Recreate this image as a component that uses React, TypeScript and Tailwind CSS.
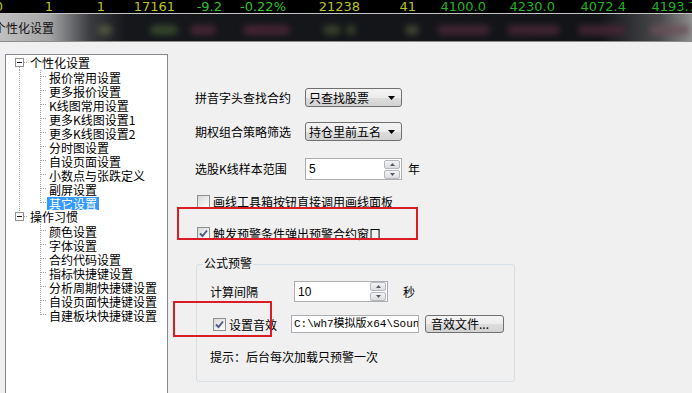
import React from "react";

const ticker = [
  { v: "0", w: "w-[3px]", c: "text-[#bcc21e]" },
  { v: "1", w: "w-[50px]", c: "text-[#bcc21e]" },
  { v: "1", w: "w-[52px]", c: "text-[#bcc21e]" },
  { v: "17161", w: "w-[70px]", c: "text-[#bcc21e]" },
  { v: "-9.2", w: "w-[47px]", c: "text-[#2cc22c]" },
  { v: "-0.22%", w: "w-[64px]", c: "text-[#2cc22c]" },
  { v: "21238", w: "w-[74px]", c: "text-[#bcc21e]" },
  { v: "41", w: "w-[56px]", c: "text-[#bcc21e]" },
  { v: "4100.0", w: "w-[70px]", c: "text-[#22b222]" },
  { v: "4230.0", w: "w-[69px]", c: "text-[#22b222]" },
  { v: "4072.4", w: "w-[71px]", c: "text-[#22b222]" },
  { v: "4193.7", w: "w-[71px]", c: "text-[#22b222]" },
];

// blurred reflections of the quote row in the glass title bar
const blobs = [
  "left-[98px] w-[14px] bg-[#5a6040]",
  "left-[150px] w-[28px] bg-[#3c5030]",
  "left-[190px] w-[26px] bg-[#502838]",
  "left-[243px] w-[47px] bg-[#502838]",
  "left-[323px] w-[18px] bg-[#404a30]",
  "left-[346px] w-[10px] bg-[#404a30]",
  "left-[405px] w-[14px] bg-[#4a5038]",
  "left-[437px] w-[53px] bg-[#4a2838]",
  "left-[507px] w-[53px] bg-[#4a2838]",
  "left-[578px] w-[48px] bg-[#4a2838]",
  "left-[650px] w-[40px] bg-[#6a5058]",
];

const tree = [
  {
    label: "个性化设置",
    children: [
      "报价常用设置",
      "更多报价设置",
      "K线图常用设置",
      "更多K线图设置1",
      "更多K线图设置2",
      "分时图设置",
      "自设页面设置",
      "小数点与张跌定义",
      "副屏设置",
      "其它设置",
    ],
  },
  {
    label: "操作习惯",
    children: [
      "颜色设置",
      "字体设置",
      "合约代码设置",
      "指标快捷键设置",
      "分析周期快捷键设置",
      "自设页面快捷键设置",
      "自建板块快捷键设置",
    ],
  },
];

const SELECTED = "其它设置";
const dot = { stroke: "#a0a0a0", strokeDasharray: "1 1" };

const RootLines = ({ first, hasNext }: { first: boolean; hasNext: boolean }) => (
  <svg width="22" height="14" shapeRendering="crispEdges" className="shrink-0">
    {!first && <line x1="13.5" y1="0" x2="13.5" y2="2" {...dot} />}
    {hasNext && <line x1="13.5" y1="11" x2="13.5" y2="14" {...dot} />}
    <line x1="18" y1="6.5" x2="22" y2="6.5" {...dot} />
    <rect x="9.5" y="2.5" width="8" height="8" fill="#fff" stroke="#919191" />
    <line x1="11" y1="6.5" x2="16" y2="6.5" stroke="#1a1a1a" />
  </svg>
);

const ChildLines = ({ parentHasNext, last }: { parentHasNext: boolean; last: boolean }) => (
  <svg width="41" height="14" shapeRendering="crispEdges" className="shrink-0">
    {parentHasNext && <line x1="13.5" y1="0" x2="13.5" y2="14" {...dot} />}
    <line x1="34.5" y1="0" x2="34.5" y2={last ? 7 : 14} {...dot} />
    <line x1="35" y1="6.5" x2="41" y2="6.5" {...dot} />
  </svg>
);

const CheckBox = ({ checked }: { checked?: boolean }) => (
  <span className="flex h-[13px] w-[13px] shrink-0 items-center justify-center border border-[#8e8f8f] bg-[linear-gradient(135deg,#d8d8d8,#fdfdfd)]">
    {checked && (
      <svg width="9" height="9" viewBox="0 0 9 9">
        <path d="M1 4.5 L3.5 7 L8 1.5" fill="none" stroke="#4a5c86" strokeWidth="1.9" />
      </svg>
    )}
  </span>
);

const Select = ({ value }: { value: string }) => (
  <div className="flex h-[19px] w-[97px] items-center justify-between rounded-[3px] border border-[#707070] bg-[linear-gradient(#f4f4f4_0%,#ececec_50%,#dedede_50%,#d2d2d2_100%)] pl-[3px] pr-[6px]">
    <span className="leading-[17px]">{value}</span>
    <svg width="7" height="4" className="shrink-0">
      <path d="M0 0h7L3.5 4z" fill="#000" />
    </svg>
  </div>
);

const Spinner = () => (
  <div className="flex flex-col gap-[1px]">
    <span className="flex h-[9px] w-[16px] items-center justify-center rounded-[2px] border border-[#b5b8bf] bg-[linear-gradient(#f4f4f4,#dcdcdc)]">
      <svg width="5" height="3"><path d="M0 3h5L2.5 0z" fill="#4d5b75" /></svg>
    </span>
    <span className="flex h-[9px] w-[16px] items-center justify-center rounded-[2px] border border-[#b5b8bf] bg-[linear-gradient(#f4f4f4,#dcdcdc)]">
      <svg width="5" height="3"><path d="M0 0h5L2.5 3z" fill="#4d5b75" /></svg>
    </span>
  </div>
);

const NumberBox = ({ value, w, h }: { value: string; w: string; h: string }) => (
  <div className={`flex items-center justify-between border border-[#abadb3] bg-white pl-[3px] pr-[1px] ${w} ${h}`}>
    <span className="font-['Liberation_Sans',sans-serif] text-[12px]">{value}</span>
    <Spinner />
  </div>
);

const App = () => {
  let parentIndex = 0;
  return (
    <div className="relative h-[393px] w-[692px] overflow-hidden bg-[#f0f0f0] font-['Noto_Sans_CJK_SC',sans-serif] text-[12px] text-black">
      {/* QUOTE ROW */}
      <div className="flex h-[13px] overflow-hidden bg-black font-['DejaVu_Sans',sans-serif] text-[13px] leading-[13px]">
        {ticker.map((t, i) => (
          <div key={i} className={`flex shrink-0 justify-end whitespace-nowrap ${t.w} ${t.c}`}>
            {t.v}
          </div>
        ))}
      </div>
      <div className="h-[1px] bg-[#c4c4c4]" />

      {/* TITLE BAR */}
      <div className="relative h-[27px] overflow-hidden bg-[linear-gradient(to_right,#c0c0c0_0px,#a4a4a4_50px,#3a3c40_90px,#15171b_125px,#121418_600px,#4a4a4c_660px,#8e8e8e_692px)]">
        {blobs.map((b) => (
          <span key={b} className={`absolute top-[11px] h-[10px] rounded-full opacity-80 blur-[3px] ${b}`} />
        ))}
        <span className="relative -ml-[6px] block text-[12px] leading-[27px] text-[#111]">个性化设置</span>
      </div>
      <div className="h-[1px] bg-[#8c8c8c]" />

      {/* BODY */}
      <div className="flex items-start">
        {/* TREE */}
        <div className="ml-[5px] mt-[12px] h-[360px] w-[163px] shrink-0 border border-[#828790] bg-white pt-[1px]">
          {tree.map((node, ni) => {
            const hasNext = ni < tree.length - 1;
            parentIndex = ni;
            return (
              <div key={node.label}>
                <div className="flex h-[14px] items-center">
                  <RootLines first={ni === 0} hasNext={hasNext} />
                  <span className="px-[2px] leading-[14px]">{node.label}</span>
                </div>
                {node.children.map((c, ci) => (
                  <div key={c} className="flex h-[14px] items-center">
                    <ChildLines parentHasNext={hasNext} last={ci === node.children.length - 1} />
                    <span
                      className={
                        c === SELECTED
                          ? "bg-[#3399ff] px-[2px] leading-[13px] text-white"
                          : "px-[2px] leading-[13px]"
                      }
                    >
                      {c}
                    </span>
                  </div>
                ))}
              </div>
            );
          })}
        </div>

        {/* SETTINGS */}
        <div className="flex flex-1 flex-col">
          <div className="ml-[27px] mt-[46px] flex h-[19px] items-center">
            <span className="w-[110px]">拼音字头查找合约</span>
            <Select value="只查找股票" />
          </div>
          <div className="ml-[27px] mt-[15px] flex h-[19px] items-center">
            <span className="w-[110px]">期权组合策略筛选</span>
            <Select value="持仓里前五名" />
          </div>
          <div className="ml-[27px] mt-[17px] flex h-[22px] items-center">
            <span className="w-[110px]">选股K线样本范围</span>
            <NumberBox value="5" w="w-[97px]" h="h-[22px]" />
            <span className="ml-[6px]">年</span>
          </div>

          <div className="ml-[29px] mt-[15px] flex h-[13px] items-center gap-[3px]">
            <CheckBox />
            <span className="leading-[13px]">画线工具箱按钮直接调用画线面板</span>
          </div>
          <div className="ml-[29px] mt-[19px] flex h-[13px] items-center gap-[3px]">
            <CheckBox checked />
            <span className="leading-[13px]">触发预警条件弹出预警合约窗口</span>
          </div>

          {/* FORMULA ALERT GROUP */}
          <div className="relative ml-[28px] mt-[24px] h-[118px] w-[319px] rounded-[3px] border border-[#d5dfe5]">
            <span className="absolute left-[6px] top-[-9px] bg-[#f0f0f0] px-[1px] leading-[14px]">公式预警</span>
            <div className="ml-[13px] mt-[16px] flex h-[21px] items-center">
              <span className="w-[84px]">计算间隔</span>
              <NumberBox value="10" w="w-[94px]" h="h-[21px]" />
              <span className="ml-[15px]">秒</span>
            </div>
            <div className="ml-[16px] mt-[13px] flex h-[18px] items-center">
              <CheckBox checked />
              <span className="ml-[3px] w-[62px] leading-[13px]">设置音效</span>
              <div className="flex h-[18px] w-[128px] items-center overflow-hidden whitespace-nowrap border border-[#abadb3] bg-white pl-[2px] font-['Liberation_Mono','Noto_Sans_CJK_SC',monospace] text-[11px]">
                C:\wh7模拟版x64\Soun
              </div>
              <button className="ml-[6px] flex h-[18px] w-[79px] items-center rounded-[3px] border border-[#707070] bg-[linear-gradient(#f4f4f4_0%,#ececec_50%,#dedede_50%,#d2d2d2_100%)] pl-[5px] text-[12px] leading-[16px]">
                音效文件...
              </button>
            </div>
            <div className="ml-[13px] mt-[17px] leading-[14px]">提示：后台每次加载只预警一次</div>
          </div>
        </div>
      </div>

      {/* RED ANNOTATIONS */}
      <div className="absolute left-[177px] top-[207px] h-[33px] w-[241px] border-2 border-[#dc1c24]" />
      <div className="absolute left-[173px] top-[301px] h-[36px] w-[99px] border-2 border-[#dc1c24]" />
    </div>
  );
};

export default App;
